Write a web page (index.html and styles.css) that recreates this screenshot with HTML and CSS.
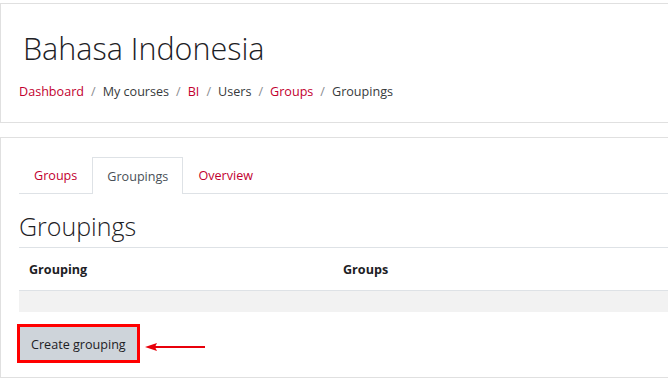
FILE: index.html
```html
<!DOCTYPE html>
<html lang="en">
<head>
    <meta charset="UTF-8">
    <title>Bahasa Indonesia: Groupings</title>
    <link rel="stylesheet" href="styles.css">
</head>
<body>
    <!-- course header with breadcrumb -->
    <div class="card page-header">
        <h1>Bahasa Indonesia</h1>
        <nav class="breadcrumb">
            <a href="#">Dashboard</a><span class="sep">/</span>
            <span>My courses</span><span class="sep">/</span>
            <a href="#">BI</a><span class="sep">/</span>
            <span>Users</span><span class="sep">/</span>
            <a href="#">Groups</a><span class="sep">/</span>
            <span>Groupings</span>
        </nav>
    </div>

    <div class="card main">
        <ul class="tabs">
            <li><a href="#">Groups</a></li>
            <li class="active"><span>Groupings</span></li>
            <li><a href="#">Overview</a></li>
        </ul>

        <h2>Groupings</h2>

        <table class="groupings">
            <thead>
                <tr>
                    <th class="col-name">Grouping</th>
                    <th>Groups</th>
                </tr>
            </thead>
            <tbody>
                <tr><td></td><td></td></tr>
            </tbody>
        </table>

        <div class="actions">
            <div class="highlight">
                <button type="button">Create grouping</button>
            </div>
            <!-- annotation arrow pointing at the button -->
            <svg class="arrow" width="62" height="10" viewBox="0 0 62 10">
                <line x1="8" y1="5" x2="60" y2="5" stroke="#e8000b" stroke-width="2.2"/>
                <polygon points="0,5 12,1 10,5 12,9" fill="#e8000b"/>
            </svg>
        </div>
    </div>
</body>
</html>
```

FILE: styles.css
```css
body {
    margin: 0;
    padding: 3px 0 0 0;
    background-color: #fff;
    font-family: "Open Sans", "Noto Sans", sans-serif;
    font-size: 12.6px;
    color: #373a3c;
    overflow: hidden;
}
a {
    color: #c2002f;
    text-decoration: none;
}
.card {
    border: 1px solid #e0e0e0;
    margin-right: -20px; /* card runs past the right edge of the window */
    background: #fff;
}
.page-header {
    padding: 22px 18px 24px 18px;
    height: 72px;
}
h1 {
    margin: 0 0 0 4px;
    font-size: 30.5px;
    font-weight: 300;
    line-height: 44px;
    color: #1d2125;
}
.breadcrumb {
    display: flex;
    margin-top: 12px;
    line-height: 20px;
}
.breadcrumb .sep {
    color: #8a8d90;
    padding: 0 7px;
}
.main {
    margin-top: 14px;
    padding: 19px 0 14px 18px;
}
.tabs {
    list-style: none;
    margin: 0;
    padding: 0;
    display: flex;
    border-bottom: 1px solid #dee2e6;
}
.tabs li a, .tabs li span {
    display: block;
    padding: 1px 14px 0 14px;
    line-height: 34px;
    border: 1px solid transparent;
    border-bottom: none;
}
.tabs li.active span {
    border-color: #dee2e6;
    color: #495057;
    background: #fff;
    margin-bottom: -1px;
    line-height: 35px;
}
h2 {
    margin: 13px 0 0 0;
    font-size: 25px;
    font-weight: 300;
    line-height: 38px;
    color: #1d2125;
}
.groupings {
    width: 100%;
    border-collapse: collapse;
    margin-top: 2px;
}
.groupings th {
    text-align: left;
    font-weight: bold;
    color: #1d2125;
    padding: 0 10px;
    height: 42px;
    border-top: 1px solid #dee2e6;
    border-bottom: 1px solid #dee2e6;
}
.groupings .col-name {
    width: 294px;
}
.groupings td {
    height: 21px;
    background-color: #f2f2f2;
    padding: 0;
}
.actions {
    display: flex;
    align-items: center;
    margin-top: 12px;
}
.highlight {
    margin-left: -2px;
    border: 3px solid #f00;
}
.highlight button {
    display: block;
    font-family: inherit;
    font-size: 12.6px;
    color: #1d2125;
    background-color: #ced4da;
    border: none;
    padding: 2px 11px 0 11px;
    height: 33px;
    cursor: pointer;
}
.arrow {
    margin-left: 5px;
    margin-top: 7px;
}
```
